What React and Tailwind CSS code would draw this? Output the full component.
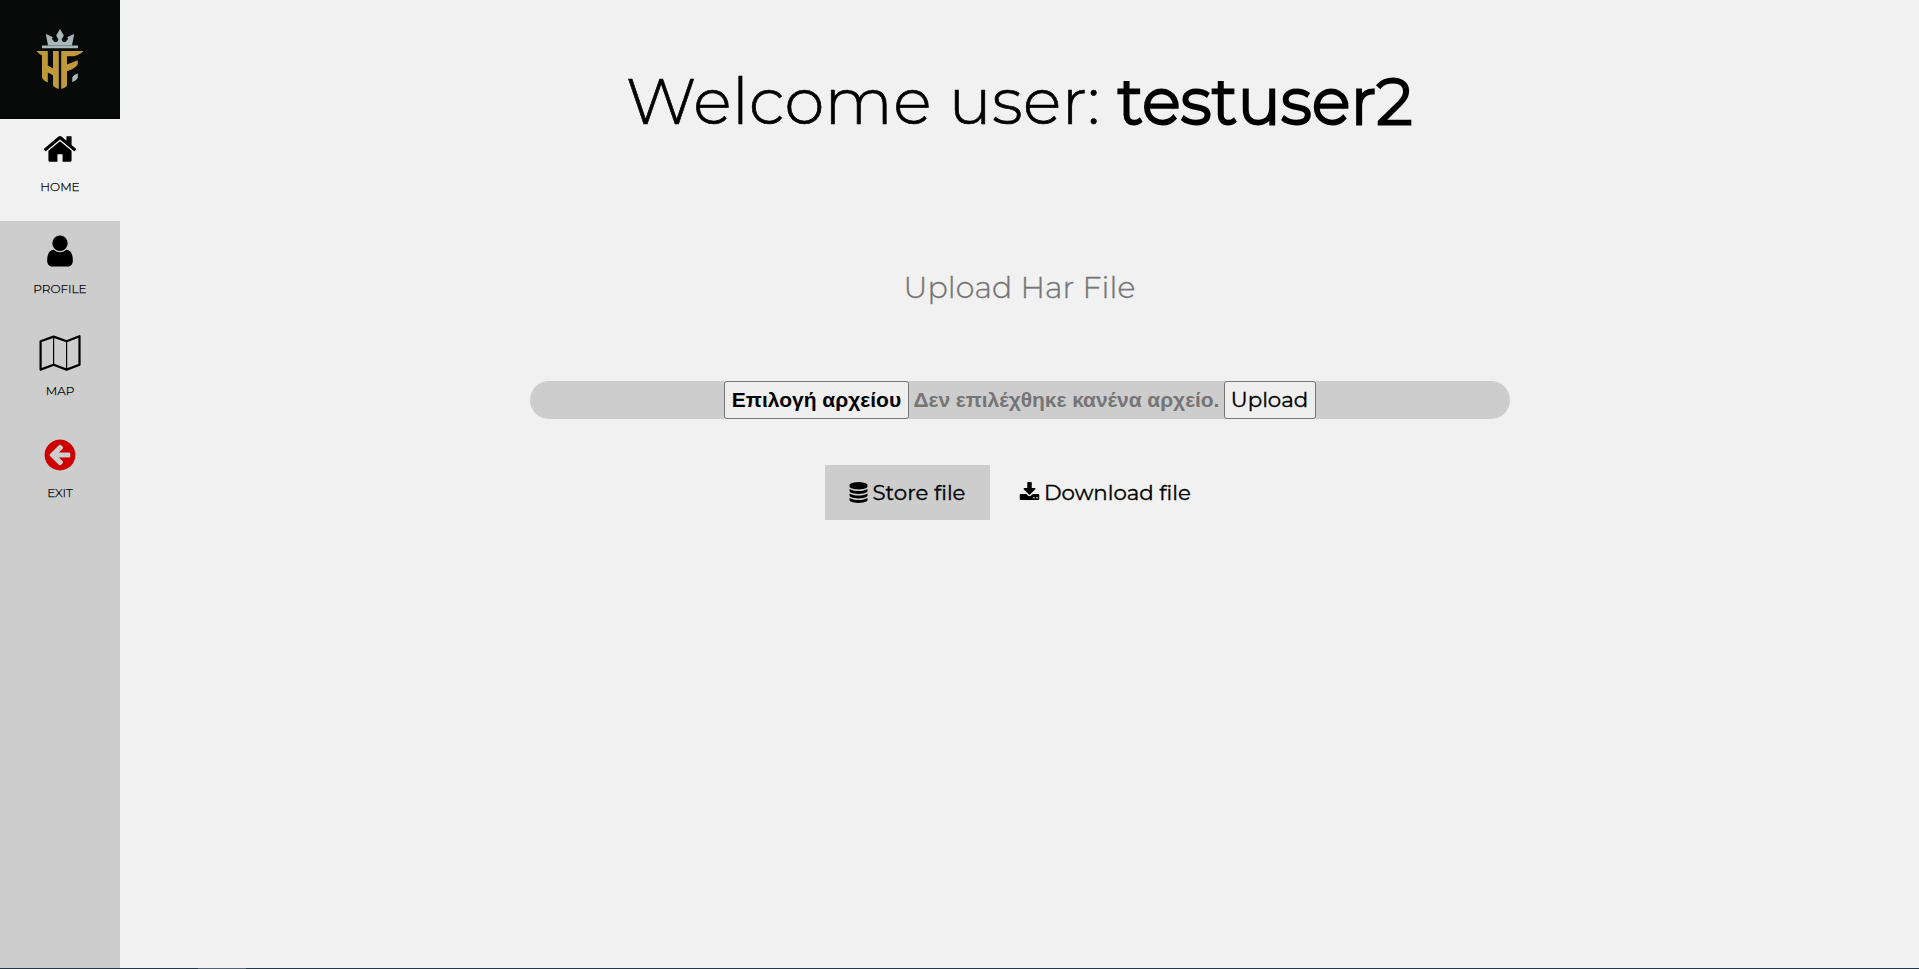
import React from 'react';

const HOME =
  'M1472 992v480q0 26-19 45t-45 19h-384v-384h-256v384h-384q-26 0-45-19t-19-45v-480q0-1 .5-3t.5-3l575-474 575 474q1 2 1 6zm223-69l-62 74q-8 9-21 11h-3q-13 0-21-7l-692-577-692 577q-12 8-24 7-13-2-21-11l-62-74q-8-10-7-23.5t11-21.5l719-599q32-26 76-26t76 26l244 204v-195q0-14 9-23t23-9h192q14 0 23 9t9 23v408l219 182q10 8 11 21.5t-7 23.5z';
const USER =
  'M1536 1399q0 109-62.5 187t-150.5 78h-854q-88 0-150.5-78t-62.5-187q0-85 8.5-160.5t31.5-152 58.5-131 94-89 134.5-34.5q131 128 313 128t313-128q76 0 134.5 34.5t94 89 58.5 131 31.5 152 8.5 160.5zm-256-887q0 159-112.5 271.5t-271.5 112.5-271.5-112.5-112.5-271.5 112.5-271.5 271.5-112.5 271.5 112.5 112.5 271.5z';
const LEFT =
  'M1408 960v-128q0-26-19-45t-45-19h-502l189-189q19-19 19-45t-19-45l-91-91q-18-18-45-18t-45 18l-362 362-91 91q-18 18-18 45t18 45l91 91 362 362q18 18 45 18t45-18l91-91q18-18 18-45t-18-45l-189-189h502q26 0 45-19t19-45zm256-64q0 209-103 385.5t-279.5 279.5-385.5 103-385.5-103-279.5-279.5-103-385.5 103-385.5 279.5-279.5 385.5-103 385.5 103 279.5 279.5 103 385.5z';
const DATABASE =
  'M896 768q237 0 443-43t325-127v170q0 69-103 128t-280 93.5-385 34.5-385-34.5-280-93.5-103-128v-170q119 84 325 127t443 43zm0 768q237 0 443-43t325-127v170q0 69-103 128t-280 93.5-385 34.5-385-34.5-280-93.5-103-128v-170q119 84 325 127t443 43zm0-384q237 0 443-43t325-127v170q0 69-103 128t-280 93.5-385 34.5-385-34.5-280-93.5-103-128v-170q119 84 325 127t443 43zm0-1152q208 0 385 34.5t280 93.5 103 128v128q0 69-103 128t-280 93.5-385 34.5-385-34.5-280-93.5-103-128v-128q0-69 103-128t280-93.5 385-34.5z';
const DOWNLOAD =
  'M1344 1344q0-26-19-45t-45-19-45 19-19 45 19 45 45 19 45-19 19-45zm256 0q0-26-19-45t-45-19-45 19-19 45 19 45 45 19 45-19 19-45zm128-224v320q0 40-28 68t-68 28h-1472q-40 0-68-28t-28-68v-320q0-40 28-68t68-28h465l135 136q58 56 136 56t136-56l136-136h464q40 0 68 28t28 68zm-325-569q17 41-14 70l-448 448q-18 19-45 19t-45-19l-448-448q-31-29-14-70 17-39 59-39h256v-448q0-26 19-45t45-19h256q26 0 45 19t19 45v448h256q42 0 59 39z';

function Glyph({ d, className }) {
  return (
    <svg viewBox="0 0 1792 1792" fill="currentColor" className={className} aria-hidden="true">
      <path d={d} />
    </svg>
  );
}

function MapIcon() {
  return (
    <svg viewBox="0 0 42 36" className="h-9 w-[42px]" fill="none" stroke="currentColor" aria-hidden="true">
      <path d="M1.6 6.2 14.6 1.6 27.6 6.2 40.5 1.2V29.8L27.6 34.6 14.6 29.8 1.6 34.6Z" strokeWidth="2.2" strokeLinejoin="round" />
      <path d="M14.6 1.6V29.8M27.6 6.2V34.6" strokeWidth="1.2" />
    </svg>
  );
}

function Logo() {
  return (
    <svg viewBox="0 0 120 119" className="h-[119px] w-[120px] bg-[#070a09]" role="img" aria-label="HF">
      <g fill="#a9b9b9">
        <path d="M42 45.6h36v2.6H42z" />
        <path d="M48 45.6 45.8 34l7 3.2-.9 1.6 2.4 3.2 2.9-.2 1.2-2.1-2.2-4.2L60 29l3.8 6.5-2.2 4.2 1.2 2.1 2.9.2 2.4-3.2-.9-1.6 7-3.2L72 45.6z" />
        <path d="M77.8 73.5v4.3q-1.2 2.8-5.5 4.4v-5q1.2-2.3 5.5-3.7z" />
      </g>
      <g fill="#bf9a3b">
        <path d="M36.5 51h11.3v14.6l5.2 2.8V51h5.8v38q-3.3-.8-5.800-3.200V75.200l-5.200-2.600v9.800q-5.800-2.400-5.800-5.400V55.300q-3-1.100-5.500-4.300z" />
        <path d="M61.2 51h22.300q-3 3.500-9.500 5.300H67v8.300l10.800-4.300v4q-2 4-10.800 6.900v14.600q-2.300 2.500-5.800 3.200z" />
      </g>
    </svg>
  );
}

function NavItem({ label, active, children }) {
  return (
    <a className={`flex h-[102px] w-full flex-col items-center pt-3 ${active ? 'bg-[#f1f1f1]' : ''}`}>
      <span className="flex h-9 items-center">{children}</span>
      <span className="mt-3 text-[12px] leading-4 font-light [-webkit-text-stroke:0.25px_black]">{label}</span>
    </a>
  );
}

export default function App() {
  return (
    <div className="flex h-[969px] w-full flex-col overflow-hidden bg-[#f1f1f1] font-[Montserrat,Inter,sans-serif] text-black">
      <div className="flex min-h-0 flex-1">
        <nav className="flex w-[120px] shrink-0 flex-col bg-[#cdcdcd]">
          <Logo />
          <NavItem label="HOME" active>
            <Glyph d={HOME} className="size-9" />
          </NavItem>
          <NavItem label="PROFILE">
            <Glyph d={USER} className="size-9" />
          </NavItem>
          <NavItem label="MAP">
            <MapIcon />
          </NavItem>
          <NavItem label="EXIT">
            <Glyph d={LEFT} className="size-9 text-[#cc0000]" />
          </NavItem>
        </nav>
        <main className="flex flex-1 flex-col items-center">
          <h1 className="mt-[53px] h-24 text-[64px] leading-[96px] font-light tracking-[0.45px] whitespace-nowrap [-webkit-text-stroke:0.7px_black]">
            Welcome user: <b className="font-light [-webkit-text-stroke:2.8px_black]">testuser2</b>
          </h1>
          <p className="mt-[119px] h-10 text-[30px] leading-10 font-light tracking-[0.15px] text-[#757575] [-webkit-text-stroke:0.35px_#757575]">Upload Har File</p>
          <form className="mt-[73px] flex h-[38px] w-[980px] items-stretch justify-center rounded-full bg-[#cdcdcd]">
            <button type="button" className="w-[185px] rounded-[3px] border border-[#767676] bg-[#efefef] pl-px font-['Liberation_Sans',sans-serif] text-[21px] font-bold whitespace-nowrap">
              Επιλογή αρχείου
            </button>
            <span className="flex w-[315px] items-center pl-[5px] font-['Liberation_Sans',sans-serif] text-[21px] font-bold tracking-[-0.05px] whitespace-nowrap text-[#757575]">
              Δεν επιλέχθηκε κανένα αρχείο.
            </span>
            <button type="button" className="w-[92px] rounded-[3px] border border-[#767676] bg-[#efefef] text-[21.3px] [-webkit-text-stroke:0.35px_black]">
              Upload
            </button>
          </form>
          <div className="mt-[46px] flex h-[55px] w-[389px] text-[21.3px] whitespace-nowrap [-webkit-text-stroke:0.35px_black]">
            <button type="button" className="flex w-[165px] items-center bg-[#cdcdcd] pl-[22.5px]">
              <Glyph d={DATABASE} className="mr-1 size-[21px]" />
              <span>Store file</span>
            </button>
            <button type="button" className="flex items-center pl-[29px]">
              <Glyph d={DOWNLOAD} className="mr-1 size-[21px]" />
              <span>Download file</span>
            </button>
          </div>
        </main>
      </div>
      <div className="flex h-px w-full bg-[#22384a]">
        <div className="ml-[198px] w-12 bg-[#526471]" />
      </div>
    </div>
  );
}
